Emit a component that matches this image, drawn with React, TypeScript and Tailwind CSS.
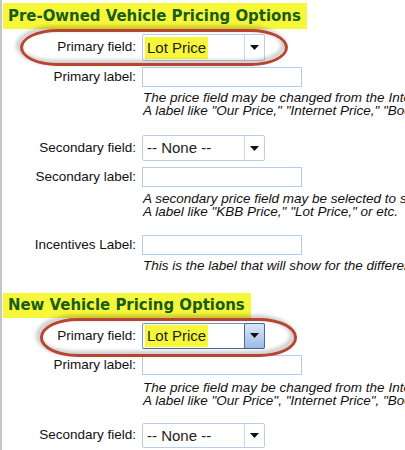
import React from "react"

const labelCls =
  "w-[140px] shrink-0 text-right pr-[6px] text-[13.5px] text-[#111] font-['Liberation_Sans',Arial,sans-serif]"

const helpCls =
  "ml-[141px] text-[13.5px] leading-[13px] italic text-[#111] font-['Liberation_Sans',Arial,sans-serif]"

function Title({ children }: { children: React.ReactNode }) {
  return (
    <div className="ml-[1px] inline-flex items-center bg-[#f7f73a] pl-[5px] pr-[6px] font-['DejaVu_Sans_Condensed','DejaVu_Sans',sans-serif] text-[16.6px] font-bold text-[#175c17]">
      {children}
    </div>
  )
}

function Select({
  value,
  highlight,
  focused,
  h,
}: {
  value: string
  highlight?: boolean
  focused?: boolean
  h: string
}) {
  return (
    <div
      className={`flex w-[123px] ${h} rounded-[2px] border bg-white ${
        focused ? "border-[#6f97c8] border-b-[#3d6da6]" : "border-[#b8cdea]"
      }`}
    >
      <div className="flex flex-1 items-center pl-[2px]">
        <span
          className={`px-[2px] text-[15px] leading-[22px] text-[#222] font-['Liberation_Sans',Arial,sans-serif] ${
            highlight ? "bg-[#f7f73a]" : ""
          }`}
        >
          {value}
        </span>
      </div>
      <div
        className={`flex w-[20px] items-center justify-center ${
          focused
            ? "-my-px -mr-px w-[21px] rounded-[2px] border border-[#3d6da6] bg-gradient-to-b from-[#dbe7f7] to-[#9dbbe4]"
            : "border-l border-[#c9d7ec]"
        }`}
      >
        <svg width="9" height="5" viewBox="0 0 9 5">
          <path d="M0 0h9L4.5 5z" fill="#111" />
        </svg>
      </div>
    </div>
  )
}

function Input({ h }: { h: string }) {
  return <div className={`w-[160px] ${h} border border-[#b3cdef] bg-white`} />
}

function Ellipse({ cls }: { cls: string }) {
  return (
    <div
      className={`pointer-events-none absolute rounded-[38px/19px] border-[3px] border-[#b84531] drop-shadow-[-3px_-2px_2px_rgba(0,0,0,0.35)] ${cls}`}
    />
  )
}

export default function App() {
  return (
    <div className="relative h-[450px] w-[405px] overflow-hidden whitespace-nowrap border-l-2 border-[#c6c6c6] bg-white">
      <div className="pt-[3px]">
        <div className="h-[26px] flex">
          <Title>Pre-Owned Vehicle Pricing Options</Title>
        </div>

        <div className="mt-[5px] flex items-center">
          <div className={labelCls}>Primary field:</div>
          <Select value="Lot Price" highlight h="h-[27px]" />
        </div>

        <div className="mt-[6px] flex items-center">
          <div className={labelCls}>Primary label:</div>
          <Input h="h-[20px]" />
        </div>

        <div className={`mt-[4px] ${helpCls}`}>
          <div>The price field may be changed from the Internet Price to any other price field.</div>
          <div>A label like "Our Price," "Internet Price," "Book Price" or etc.</div>
        </div>

        <div className="mt-[18px] flex items-center">
          <div className={labelCls}>Secondary field:</div>
          <Select value="-- None --" h="h-[26px]" />
        </div>

        <div className="mt-[6px] flex items-center">
          <div className={labelCls}>Secondary label:</div>
          <Input h="h-[20px]" />
        </div>

        <div className={`mt-[4px] ${helpCls}`}>
          <div>A secondary price field may be selected to show below the primary price.</div>
          <div>A label like "KBB Price," "Lot Price," or etc.</div>
        </div>

        <div className="mt-[17px] flex items-center">
          <div className={labelCls}>Incentives Label:</div>
          <Input h="h-[20px]" />
        </div>

        <div className={`mt-[4px] ${helpCls}`}>
          <div>This is the label that will show for the difference in price.</div>
        </div>

        <div className="mt-[21px] h-[25px] flex">
          <Title>New Vehicle Pricing Options</Title>
        </div>

        <div className="mt-[5px] flex items-center">
          <div className={labelCls}>Primary field:</div>
          <Select value="Lot Price" highlight focused h="h-[26px]" />
        </div>

        <div className="mt-[6px] flex items-center">
          <div className={labelCls}>Primary label:</div>
          <Input h="h-[20px]" />
        </div>

        <div className={`mt-[6px] ${helpCls}`}>
          <div>The price field may be changed from the Internet Price to any other price field.</div>
          <div>A label like "Our Price", "Internet Price", "Book Price" or etc.</div>
        </div>

        <div className="mt-[16px] flex items-center">
          <div className={labelCls}>Secondary field:</div>
          <Select value="-- None --" h="h-[25px]" />
        </div>
      </div>

      <Ellipse cls="left-[18px] top-[29px] h-[37px] w-[268px]" />
      <Ellipse cls="left-[38px] top-[318px] h-[39px] w-[257px]" />
    </div>
  )
}
